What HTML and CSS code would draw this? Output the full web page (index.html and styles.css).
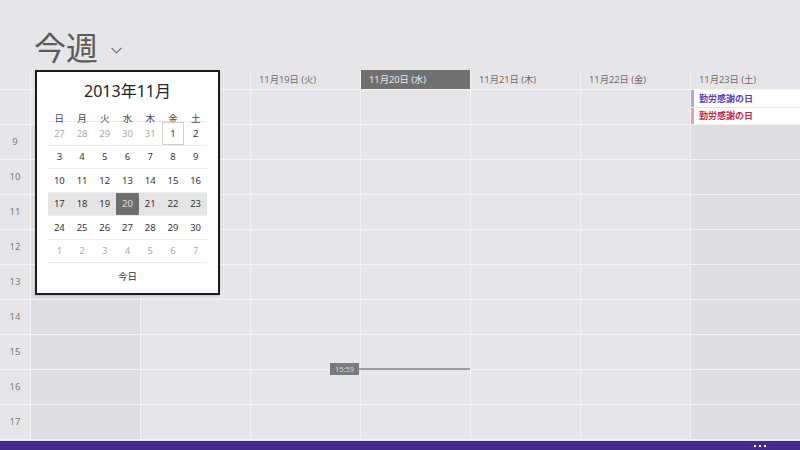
FILE: index.html
```html
<!DOCTYPE html>
<html lang="ja">
<head>
<meta charset="utf-8">
<title>今週</title>
<link rel="stylesheet" href="styles.css">
</head>
<body>
<div class="page">
  <header class="top">
    <h1 class="title">今週</h1>
    <svg class="chev" width="11" height="7" viewBox="0 0 11 7"><polyline points="0.5,0.8 5.5,5.8 10.5,0.8" fill="none" stroke="#666" stroke-width="1.1"/></svg>
  </header>

  <div class="grid">
    <div class="hd"></div>
    <div class="hd"></div>
    <div class="hd"></div>
    <div class="hd">11月19日 (火)</div>
    <div class="hd today">11月20日 (水)</div>
    <div class="hd">11月21日 (木)</div>
    <div class="hd">11月22日 (金)</div>
    <div class="hd">11月23日 (土)</div>

    <div class="c"></div>
    <div class="c"></div>
    <div class="c"></div>
    <div class="c"></div>
    <div class="c"></div>
    <div class="c"></div>
    <div class="c"></div>
    <div class="c allday">
      <div class="ev ev-purple">勤労感謝の日</div>
      <div class="ev ev-red">勤労感謝の日</div>
    </div>

    <div class="t">9</div><div class="c we"></div><div class="c"></div><div class="c"></div><div class="c"></div><div class="c"></div><div class="c"></div><div class="c we"></div>
    <div class="t">10</div><div class="c we"></div><div class="c"></div><div class="c"></div><div class="c"></div><div class="c"></div><div class="c"></div><div class="c we"></div>
    <div class="t">11</div><div class="c we"></div><div class="c"></div><div class="c"></div><div class="c"></div><div class="c"></div><div class="c"></div><div class="c we"></div>
    <div class="t">12</div><div class="c we"></div><div class="c"></div><div class="c"></div><div class="c"></div><div class="c"></div><div class="c"></div><div class="c we"></div>
    <div class="t">13</div><div class="c we"></div><div class="c"></div><div class="c"></div><div class="c"></div><div class="c"></div><div class="c"></div><div class="c we"></div>
    <div class="t">14</div><div class="c we"></div><div class="c"></div><div class="c"></div><div class="c"></div><div class="c"></div><div class="c"></div><div class="c we"></div>
    <div class="t">15</div><div class="c we"></div><div class="c"></div><div class="c"></div><div class="c"></div><div class="c"></div><div class="c"></div><div class="c we"></div>
    <div class="t">16</div><div class="c we"></div><div class="c"></div><div class="c"></div><div class="c"></div><div class="c"></div><div class="c"></div><div class="c we"></div>
    <div class="t">17</div><div class="c we"></div><div class="c"></div><div class="c"></div><div class="c"></div><div class="c"></div><div class="c"></div><div class="c we"></div>
  </div>
  <div class="spacer"></div>
  <footer class="appbar"><span class="dot"></span><span class="dot"></span><span class="dot"></span></footer>

  <div class="now">
    <span class="now-label">15:59</span>
    <span class="now-line"></span>
  </div>

  <div class="picker">
    <div class="month">2013年11月</div>
    <div class="cal">
      <div class="row wd"><span>日</span><span>月</span><span>火</span><span>水</span><span>木</span><span>金</span><span>土</span></div>
      <div class="row"><span class="o">27</span><span class="o">28</span><span class="o">29</span><span class="o">30</span><span class="o">31</span><span class="first">1</span><span>2</span></div>
      <div class="row"><span>3</span><span>4</span><span>5</span><span>6</span><span>7</span><span>8</span><span>9</span></div>
      <div class="row"><span>10</span><span>11</span><span>12</span><span>13</span><span>14</span><span>15</span><span>16</span></div>
      <div class="row week"><span>17</span><span>18</span><span>19</span><span class="sel">20</span><span>21</span><span>22</span><span>23</span></div>
      <div class="row"><span>24</span><span>25</span><span>26</span><span>27</span><span>28</span><span>29</span><span>30</span></div>
      <div class="row"><span class="o">1</span><span class="o">2</span><span class="o">3</span><span class="o">4</span><span class="o">5</span><span class="o">6</span><span class="o">7</span></div>
    </div>
    <div class="todaylink">今日</div>
  </div>
</div>
</body>
</html>
```

FILE: styles.css
```css
* { box-sizing: border-box; }
html, body { margin: 0; padding: 0; }
body {
  width: 800px;
  height: 450px;
  overflow: hidden;
  background: #e6e6e8;
  font-family: "Noto Sans", "Noto Sans CJK JP", sans-serif;
  color: #333;
}
.page { position: relative; width: 800px; height: 450px; }

.top {
  height: 70px;
  display: flex;
  align-items: flex-start;
  padding: 26px 0 0 34px;
}
.title {
  margin: 0;
  font-family: "Noto Sans CJK JP", sans-serif;
  font-weight: 400;
  font-size: 32px;
  line-height: 40px;
  color: #5a5a5a;
}
.chev { margin: 21px 0 0 13px; }

.grid {
  display: grid;
  grid-template-columns: 30px repeat(7, 109px);
  grid-template-rows: 19px 34px repeat(9, 34px);
  gap: 1px;
  background: #f3f3f5;
  padding-bottom: 1px;
}
.grid > div { background: #e6e6e8; }
.hd {
  font-family: "Noto Sans", "Noto Sans CJK JP", sans-serif;
  font-size: 9.3px;
  line-height: 19px;
  color: #6a6a6a;
  padding-left: 8px;
  white-space: nowrap;
}
.grid > .hd.today { background: #707070; color: #ececec; }
.t {
  font-size: 9.5px;
  color: #777;
  text-align: center;
  line-height: 34px;
}
.grid > .c.we { background: #dedee0; }
.grid > .allday {
  display: flex;
  flex-direction: column;
  gap: 1px;
  background: #e8e8ea;
}
.ev {
  flex: 1;
  background: #fff;
  font-family: "Noto Sans CJK JP", sans-serif;
  font-size: 9px;
  font-weight: 700;
  padding-left: 5px;
  display: flex;
  align-items: center;
  border-left: 3px solid;
}
.ev-purple { color: #5a3cbe; border-left-color: #b0a5e2; }
.ev-red { color: #c42a4c; border-left-color: #eba0ad; }

.spacer { height: 1px; }
.appbar {
  height: 9px;
  background: #452b8b;
  display: flex;
  justify-content: flex-end;
  align-items: center;
  gap: 3px;
  padding-right: 34px;
}
.dot { width: 2px; height: 2px; background: #fff; }

.now { position: absolute; left: 330px; top: 363px; display: flex; align-items: center; }
.now-label {
  width: 29px;
  height: 12px;
  background: #7a7a7a;
  color: #d4d4d4;
  font-size: 7.5px;
  line-height: 12px;
  text-align: center;
}
.now-line { width: 111px; height: 2px; background: #9c9c9c; }

.picker {
  position: absolute;
  left: 35px;
  top: 70px;
  width: 185px;
  height: 225px;
  background: #fff;
  border: 2px solid #1c1c1c;
  box-shadow: 0 1px 2px rgba(0,0,0,0.15);
  padding: 0 11px;
}
.month {
  height: 36px;
  display: flex;
  align-items: center;
  justify-content: center;
  font-size: 16px;
  color: #222;
  font-family: "Noto Sans", "Noto Sans CJK JP", sans-serif;
}
.cal { display: flex; flex-direction: column; }
.row {
  display: grid;
  grid-template-columns: repeat(7, 1fr);
  height: 23.5px;
  border-bottom: 1px solid #ececec;
  font-size: 9.5px;
  color: #333;
}
.row span {
  display: flex;
  align-items: center;
  justify-content: center;
}
.row.wd { height: 14px; padding-top: 3px; font-family: "Noto Sans CJK JP", sans-serif; font-size: 9.5px; color: #444; }
.row .o { color: #aaa; }
.row.week { background: #e4e4e4; }
.row .sel { background: #6e6e6e; color: #e2e2e2; }
.row .first { box-shadow: inset 0 0 0 1px #cfcfcf; }
.todaylink {
  height: 26px;
  display: flex;
  align-items: center;
  justify-content: center;
  font-family: "Noto Sans CJK JP", sans-serif;
  font-size: 9.5px;
  color: #333;
}
```
